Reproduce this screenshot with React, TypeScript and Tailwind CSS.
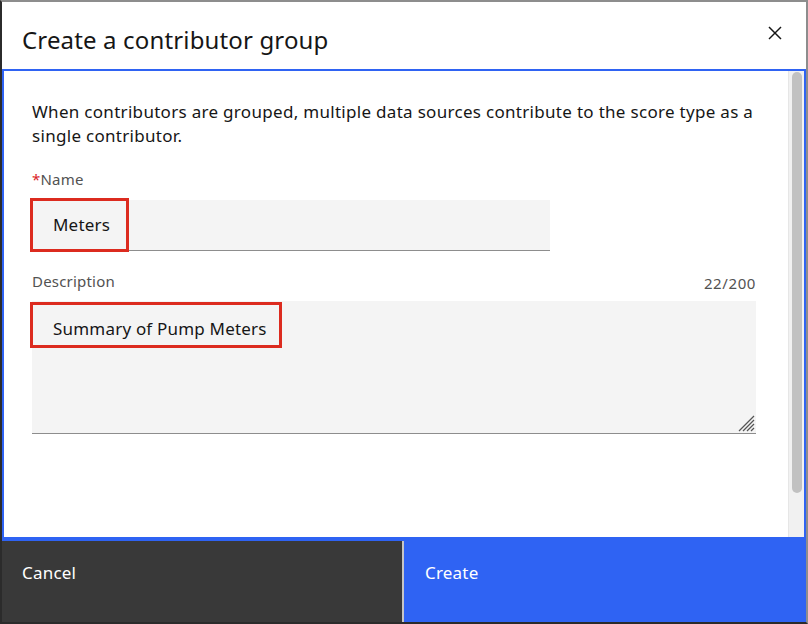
import React from "react";

const CloseIcon = () => (
  <svg width="14" height="14" viewBox="0 0 14 14" fill="none" stroke="#161616" strokeWidth="1.5">
    <line x1="1" y1="1" x2="13" y2="13" />
    <line x1="13" y1="1" x2="1" y2="13" />
  </svg>
);

const ResizeHandle = () => (
  <svg width="17" height="17" viewBox="0 0 17 17" stroke="#555" strokeWidth="1.2">
    <line x1="16" y1="1" x2="1" y2="16" />
    <line x1="16" y1="5" x2="5" y2="16" />
    <line x1="16" y1="9" x2="9" y2="16" />
    <line x1="16" y1="13" x2="13" y2="16" />
  </svg>
);

export default function App() {
  return (
    <div className="w-[808px] h-[624px] flex flex-col bg-white border-t-2 border-t-[#8d8d8d] border-l-2 border-l-[#2b2b2b] border-r-2 border-r-[#8d8d8d] border-b-2 border-b-[#2b2b2b] font-['Noto_Sans',sans-serif] text-[#161616]">
      {/* header */}
      <header className="h-[67px] shrink-0 flex items-start justify-between pl-[20px] pr-[24px]">
        <h2 className="pt-[22px] text-[24px] leading-[32px] tracking-[0.15px]">Create a contributor group</h2>
        <button className="mt-[24px]">
          <CloseIcon />
        </button>
      </header>

      {/* body */}
      <div className="flex-1 flex min-h-0 border-2 border-b-4 border-[#2f63f3]">
        <div className="flex-1 pl-[28px] pr-[32px] pt-[29px]">
          <p className="text-[17px] leading-[24px] tracking-[0.3px]">
            When contributors are grouped, multiple data sources contribute to the score type as a single contributor.
          </p>

          <label className="block mt-[22px] text-[15px] leading-[18px] tracking-[0.2px] text-[#525252]">
            <span className="text-[#da1e28]">*</span>Name
          </label>
          <div className="relative mt-[12px] w-[518px] h-[51px] bg-[#f4f4f4] border-b border-[#8d8d8d] flex items-center pl-[21px] text-[17px] tracking-[0.2px]">
            Meters
            <div className="absolute -left-[2px] -top-[2px] w-[99px] h-[54px] border-[3px] border-[#dc2b1f]" />
          </div>

          <div className="mt-[21px] flex justify-between text-[15px] leading-[18px] tracking-[0.2px] text-[#525252]">
            <span>Description</span>
            <span className="pt-[2px] tracking-[0.6px]">22/200</span>
          </div>
          <div className="relative mt-[9px] h-[133px] bg-[#f4f4f4] border-b border-[#8d8d8d] pl-[21px] pt-[16px] text-[17px] leading-[24px] tracking-[0.2px]">
            Summary of Pump Meters
            <div className="absolute -left-[2px] top-[1px] w-[252px] h-[46px] border-[3px] border-[#dc2b1f]" />
            <div className="absolute right-[1px] bottom-[1px]">
              <ResizeHandle />
            </div>
          </div>
        </div>

        {/* scrollbar */}
        <div className="w-[16px] shrink-0 bg-[#f1f1f1] border-l border-[#e6e6e6] pt-[1px] pl-[3px]">
          <div className="w-[10px] h-[421px] rounded-full bg-[#c1c1c1]" />
        </div>
      </div>

      {/* footer */}
      <footer className="h-[81px] shrink-0 flex text-white text-[17px] leading-[20px] tracking-[0.2px]">
        <button className="w-[402px] bg-[#393939] text-left pl-[20px] pt-[22px] flex items-start border-r-2 border-[#c6c6c6]">
          Cancel
        </button>
        <button className="flex-1 bg-[#2f63f3] text-left pl-[21px] pt-[22px] flex items-start">
          Create
        </button>
      </footer>
    </div>
  );
}
